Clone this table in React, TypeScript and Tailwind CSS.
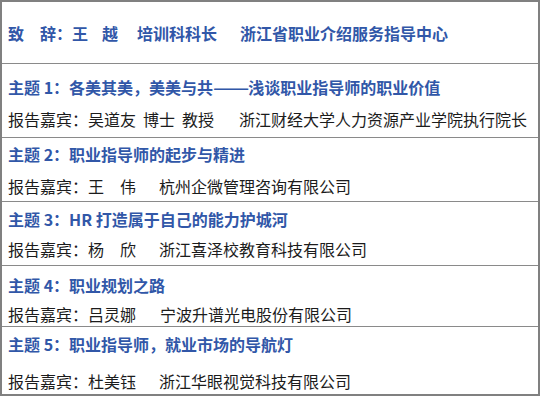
import React from 'react';

const font = { fontFamily: '"Noto Sans CJK SC", "Noto Sans", sans-serif' };

type Row = {
  title: React.ReactNode;
  name: React.ReactNode;
  h: string;
  pt: string;
  gap: string;
};

const rows: Row[] = [
  {
    title: (
      <>
        主题 1：各美其美，美美与共
        <span className="inline-block origin-left scale-x-[1.33] mr-[8px]">——</span>
        浅谈职业指导师的职业价值
      </>
    ),
    name: (
      <>
        <span>吴道友</span>
        <span className="ml-[7px]">博士</span>
        <span className="ml-[7px]">教授</span>
        <span className="ml-[25px]">浙江财经大学人力资源产业学院执行院长</span>
      </>
    ),
    h: 'h-[74px]',
    pt: 'pt-[12px]',
    gap: 'mt-[10px]',
  },
  {
    title: '主题 2：职业指导师的起步与精进',
    name: (
      <>
        <span>王　伟</span>
        <span className="ml-[23px]">杭州企微管理咨询有限公司</span>
      </>
    ),
    h: 'h-[64px]',
    pt: 'pt-[5px]',
    gap: 'mt-[10px]',
  },
  {
    title: '主题 3：HR 打造属于自己的能力护城河',
    name: (
      <>
        <span>杨　欣</span>
        <span className="ml-[23px]">浙江喜泽校教育科技有限公司</span>
      </>
    ),
    h: 'h-[64px]',
    pt: 'pt-[6px]',
    gap: 'mt-[8px]',
  },
  {
    title: '主题 4：职业规划之路',
    name: (
      <>
        <span>吕灵娜</span>
        <span className="ml-[24px]">宁波升谱光电股份有限公司</span>
      </>
    ),
    h: 'h-[61px]',
    pt: 'pt-[8px]',
    gap: 'mt-[7px]',
  },
  {
    title: '主题 5：职业指导师，就业市场的导航灯',
    name: (
      <>
        <span>杜美钰</span>
        <span className="ml-[23px]">浙江华眼视觉科技有限公司</span>
      </>
    ),
    h: 'flex-1',
    pt: 'pt-[6px]',
    gap: 'mt-[15px]',
  },
];

const App: React.FC = () => {
  return (
    <div className="w-[540px] h-[396px] bg-white" style={font}>
      <div className="w-[540px] h-[396px] flex flex-col border-2 border-[#808080] text-[16px] leading-[22px]">
        {/* header */}
        <div className="h-[62px] flex items-center pl-[6px] border-b border-[#8a8a8a] font-bold text-[#3157a8] whitespace-nowrap">
          <span>致　辞：王</span>
          <span className="ml-[14px]">越</span>
          <span className="ml-[19px]">培训科科长</span>
          <span className="ml-[23px]">浙江省职业介绍服务指导中心</span>
        </div>

        {rows.map((r, i) => (
          <div
            key={i}
            className={`${r.h} ${r.pt} pl-[6px] ${i < rows.length - 1 ? 'border-b border-[#8a8a8a]' : ''} whitespace-nowrap`}
          >
            <div className="font-bold text-[#3157a8]">{r.title}</div>
            <div className={`${r.gap} text-[#1c1c1c]`}>
              <span>报告嘉宾：</span>
              {r.name}
            </div>
          </div>
        ))}
      </div>
    </div>
  );
};

export default App;
